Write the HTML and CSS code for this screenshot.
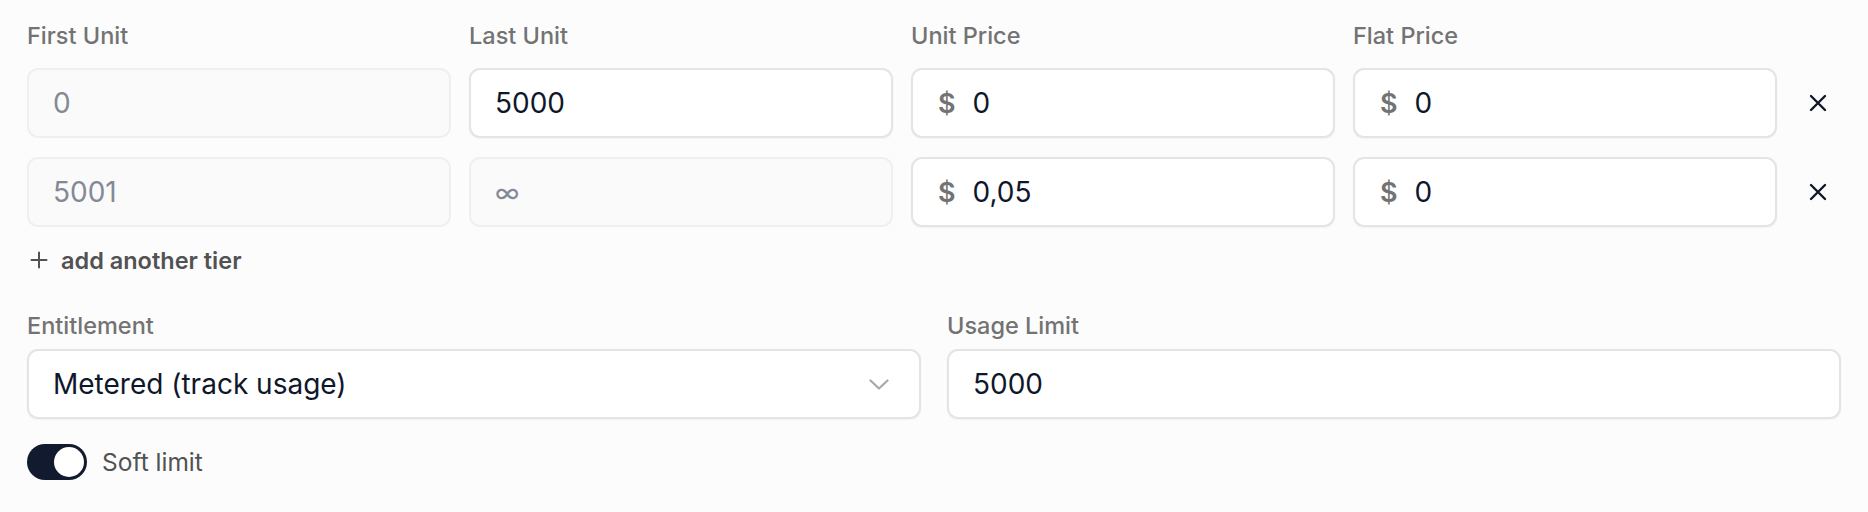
FILE: index.html
```html
<!DOCTYPE html>
<html lang="en">
<head>
<meta charset="utf-8">
<title>Tiers</title>
<link rel="stylesheet" href="styles.css">
</head>
<body>
<div class="page">
  <div class="tiers">
    <div class="label">First Unit</div>
    <div class="label">Last Unit</div>
    <div class="label">Unit Price</div>
    <div class="label">Flat Price</div>
    <div></div>

    <div class="field disabled"><span class="value muted">0</span></div>
    <div class="field"><span class="value">5000</span></div>
    <div class="field"><span class="cur">$</span><span class="value">0</span></div>
    <div class="field"><span class="cur">$</span><span class="value">0</span></div>
    <button class="remove" aria-label="Remove tier"><svg width="20" height="20" viewBox="0 0 20 20"><path d="M3 3 L17 17 M17 3 L3 17" stroke="#0f172a" stroke-width="2.4" stroke-linecap="round" fill="none"/></svg></button>

    <div class="field disabled"><span class="value muted">5001</span></div>
    <div class="field disabled"><span class="value muted inf">∞</span></div>
    <div class="field"><span class="cur">$</span><span class="value">0,05</span></div>
    <div class="field"><span class="cur">$</span><span class="value">0</span></div>
    <button class="remove" aria-label="Remove tier"><svg width="20" height="20" viewBox="0 0 20 20"><path d="M3 3 L17 17 M17 3 L3 17" stroke="#0f172a" stroke-width="2.4" stroke-linecap="round" fill="none"/></svg></button>
  </div>

  <button class="add-tier"><svg width="18" height="18" viewBox="0 0 18 18"><path d="M9 1.5 V16.5 M1.5 9 H16.5" stroke="#525252" stroke-width="2" stroke-linecap="round" fill="none"/></svg><span>add another tier</span></button>

  <div class="lower">
    <div class="col">
      <div class="label small">Entitlement</div>
      <div class="field select"><span class="value">Metered (track usage)</span><svg class="chev" width="20" height="11" viewBox="0 0 20 11"><path d="M1.5 1.5 L10 9.5 L18.5 1.5" stroke="#a8a8a8" stroke-width="2.2" stroke-linecap="round" stroke-linejoin="round" fill="none"/></svg></div>
    </div>
    <div class="col">
      <div class="label small">Usage Limit</div>
      <div class="field"><span class="value">5000</span></div>
    </div>
  </div>

  <div class="switch-row">
    <span class="switch"><span class="knob"></span></span>
    <span class="switch-label">Soft limit</span>
  </div>
</div>
</body>
</html>
```

FILE: styles.css
```css
html, body {
  margin: 0;
  padding: 0;
  background: #fcfcfc;
}
body {
  font-family: "Inter", "Liberation Sans", sans-serif;
  color: #0f172a;
}
.page {
  padding: 22px 27px 0 27px;
}
.tiers {
  display: grid;
  grid-template-columns: repeat(4, 1fr) 46px;
  column-gap: 18px;
  row-gap: 19px;
}
.label {
  font-size: 23.5px;
  line-height: 28px;
  font-weight: 500;
  color: #737373;
  margin-bottom: -1px;
}
.field {
  height: 70px;
  box-sizing: border-box;
  border: 2px solid #e4e4e4;
  border-radius: 11px;
  background: #ffffff;
  display: flex;
  align-items: center;
  padding: 0 24px;
  box-shadow: 0 1px 2px rgba(0,0,0,0.04);
}
.field.disabled {
  background: #fafafa;
  border-color: #efefef;
  box-shadow: none;
}
.value {
  font-size: 28px;
  color: #0f172a;
}
.value.muted {
  color: #848996;
}
.inf {
  font-size: 26px;
}
.cur {
  font-size: 27px;
  font-weight: 600;
  color: #737373;
  margin-left: 1px;
  margin-right: 17px;
}
.remove {
  border: 0;
  background: transparent;
  padding: 0;
  display: flex;
  align-items: center;
  justify-content: center;
  cursor: pointer;
}
.add-tier {
  margin-top: 13px;
  height: 40px;
  border: 0;
  background: transparent;
  padding: 0 0 0 3px;
  display: flex;
  align-items: center;
  gap: 13px;
  font-family: inherit;
  font-size: 23.5px;
  font-weight: 600;
  color: #525252;
  cursor: pointer;
}
.lower {
  margin-top: 32px;
  display: grid;
  grid-template-columns: 1fr 1fr;
  column-gap: 26px;
}
.col {
  display: flex;
  flex-direction: column;
  gap: 9px;
}
.label.small {
  margin-bottom: 0;
}
.select {
  justify-content: space-between;
  padding-right: 30px;
}
.switch-row {
  margin-top: 25px;
  display: flex;
  align-items: center;
  gap: 15px;
}
.switch {
  width: 60px;
  height: 36px;
  border-radius: 18px;
  background: #111a2e;
  box-sizing: border-box;
  padding: 3px;
  display: flex;
  justify-content: flex-end;
}
.knob {
  width: 30px;
  height: 30px;
  border-radius: 50%;
  background: #ffffff;
}
.switch-label {
  font-size: 24.5px;
  color: #525252;
}
```
